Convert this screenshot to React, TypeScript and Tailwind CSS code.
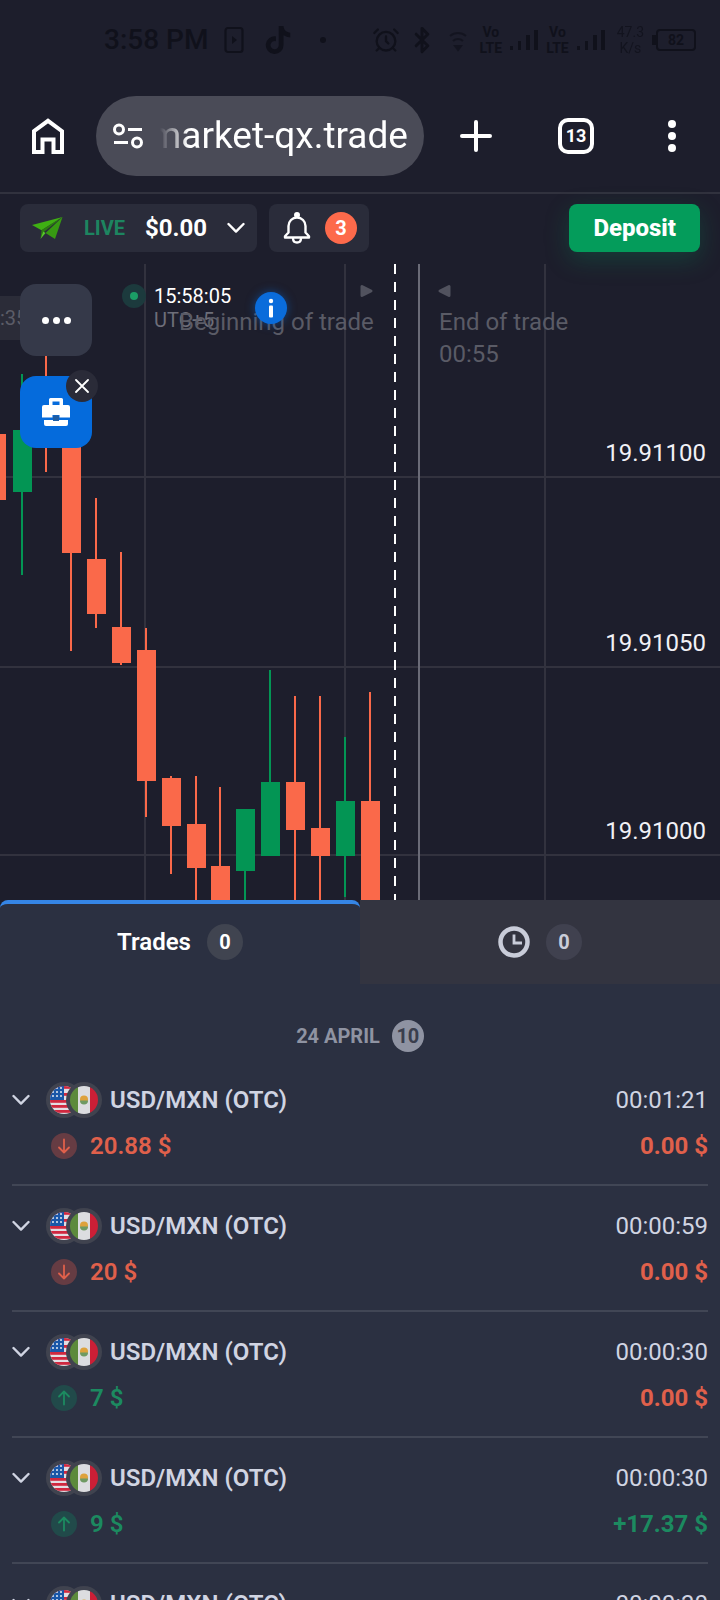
import React from "react";
import clsx from "clsx";
import { FaTiktok } from "react-icons/fa6";
import { AlarmClock, Bluetooth } from "lucide-react";

type Candle = {
  x: number
  high: number
  top: number
  bottom: number
  low: number
  up?: boolean
}

type Trade = {
  pair: string
  duration: string
  amount?: string
  result?: string
  direction: 'up' | 'down'
  won?: boolean
}

// y values are measured from the top of the plot
const CANDLES: Candle[] = [
  { x: -4, high: 170, top: 170, bottom: 236, low: 236 },
  { x: 22, high: 110, top: 166, bottom: 228, low: 311, up: true },
  { x: 46, high: 90, top: 120, bottom: 176, low: 208 },
  { x: 71, high: 160, top: 176, bottom: 289, low: 387 },
  { x: 96, high: 234, top: 295, bottom: 350, low: 364 },
  { x: 121, high: 288, top: 363, bottom: 399, low: 401 },
  { x: 146, high: 364, top: 386, bottom: 517, low: 553 },
  { x: 171, high: 512, top: 514, bottom: 562, low: 610 },
  { x: 196, high: 512, top: 560, bottom: 604, low: 640 },
  { x: 220, high: 523, top: 602, bottom: 640, low: 640 },
  { x: 245, high: 545, top: 545, bottom: 607, low: 640, up: true },
  { x: 270, high: 406, top: 518, bottom: 592, low: 592, up: true },
  { x: 295, high: 432, top: 518, bottom: 566, low: 640 },
  { x: 320, high: 432, top: 564, bottom: 592, low: 640 },
  { x: 345, high: 473, top: 537, bottom: 592, low: 633, up: true },
  { x: 370, high: 428, top: 537, bottom: 640, low: 640 },
]

const TRADES: Trade[] = [
  { pair: 'USD/MXN (OTC)', duration: '00:01:21', amount: '20.88 $', result: '0.00 $', direction: 'down' },
  { pair: 'USD/MXN (OTC)', duration: '00:00:59', amount: '20 $', result: '0.00 $', direction: 'down' },
  { pair: 'USD/MXN (OTC)', duration: '00:00:30', amount: '7 $', result: '0.00 $', direction: 'up' },
  { pair: 'USD/MXN (OTC)', duration: '00:00:30', amount: '9 $', result: '+17.37 $', direction: 'up', won: true },
  { pair: 'USD/MXN (OTC)', duration: '00:00:30', direction: 'up' },
]

const ChevronIcon = ({ className }: { className?: string }) => (
  <svg className={clsx('h-3 w-[18px] shrink-0', className)} viewBox="0 0 18 12" fill="none" stroke="currentColor" strokeWidth="2.4" strokeLinecap="round" strokeLinejoin="round">
    <path d="M1.5 2 9 9.6 16.5 2" />
  </svg>
)

const SignalBars = () => (
  <svg className="h-6 w-7" viewBox="0 0 28 24" fill="currentColor">
    <rect x="0" y="18" width="3" height="4" />
    <rect x="8" y="13" width="3" height="9" />
    <rect x="16" y="7" width="4" height="15" />
    <rect x="24" y="2" width="4" height="20" />
  </svg>
)

const VoLte = () => (
  <div className="flex flex-col items-center text-sm leading-4 font-bold">
    <span>Vo</span>
    <span>LTE</span>
  </div>
)

const StatusBar = () => (
  <div className="flex h-20 shrink-0 items-center justify-between pr-6 pl-[104px] text-[#10111b]">
    <div className="flex items-center">
      <span className="text-[28px] font-medium leading-8">3:58 PM</span>
      <svg className="ml-4 h-7 w-5" viewBox="0 0 20 28" fill="none" stroke="currentColor" strokeWidth="2.2">
        <rect x="1.5" y="2" width="17" height="24" rx="2.5" />
        <path d="m8 10 5 4-5 4Z" fill="currentColor" stroke="none" />
      </svg>
      <FaTiktok className="ml-5 h-7 w-7" />
      <span className="ml-7 h-1.5 w-1.5 rounded-full bg-current" />
    </div>
    <div className="flex items-center gap-2">
      <AlarmClock className="h-7 w-7" />
      <Bluetooth className="h-7 w-7" strokeWidth={2.5} />
      <svg className="mx-1 h-6 w-5 opacity-70" viewBox="0 0 20 24" fill="none" stroke="currentColor" strokeWidth="2">
        <path d="M2 8a12 12 0 0 1 16 0M5 13a7 7 0 0 1 10 0" />
        <path d="m10 22-3-4h6Z" fill="currentColor" />
      </svg>
      <VoLte />
      <SignalBars />
      <VoLte />
      <SignalBars />
      <div className="ml-1 flex flex-col items-center text-sm leading-4 opacity-80">
        <span>47.3</span>
        <span>K/s</span>
      </div>
      <div className="flex items-center">
        <span className="h-2.5 w-1 bg-current" />
        <span className="flex h-[22px] w-10 items-center justify-center rounded-sm border-2 border-current text-sm font-bold">82</span>
      </div>
    </div>
  </div>
)

const BrowserBar = () => {
  const [url, setUrl] = React.useState('market-qx.trade')

  return (
    <div className="flex shrink-0 items-center border-b-2 border-[#31323e] py-4 text-white">
      <button aria-label="Home" className="flex w-24 shrink-0 justify-center">
        <svg className="h-9 w-8" viewBox="0 0 32 36" fill="none" stroke="currentColor" strokeWidth="4">
          <path d="M2 13.2 16 2.8l14 10.4V34h-8.500V21.500h-11V34H2Z" />
        </svg>
      </button>
      <div className="flex h-20 min-w-0 flex-1 items-center gap-1 rounded-full bg-[#4a4b57] px-4">
        <svg className="h-7 w-8 shrink-0" viewBox="0 0 32 28" fill="none" stroke="currentColor" strokeWidth="3">
          <circle cx="7" cy="7.500" r="4.500" />
          <path d="M16 7.500h14M2 20.500h14" />
          <circle cx="25" cy="20.500" r="4.500" />
        </svg>
        <input
          aria-label="Address"
          value={url}
          onChange={(e) => setUrl(e.target.value)}
          className="w-full min-w-0 bg-transparent text-right text-[37px] leading-12 outline-none [mask-image:linear-gradient(to_right,transparent_12px,black_40px)]"
        />
      </div>
      <button aria-label="New tab" className="flex w-[104px] shrink-0 justify-center">
        <svg className="h-8 w-8" viewBox="0 0 32 32" fill="none" stroke="currentColor" strokeWidth="4" strokeLinecap="round">
          <path d="M16 2v28M2 16h28" />
        </svg>
      </button>
      <button aria-label="Open tabs" className="flex w-24 shrink-0 justify-center">
        <span className="flex h-9 w-9 items-center justify-center rounded-[10px] border-4 border-white text-lg font-bold">13</span>
      </button>
      <button aria-label="Menu" className="flex w-24 shrink-0 flex-col items-center gap-1">
        <span className="h-2 w-2 rounded-full bg-white" />
        <span className="h-2 w-2 rounded-full bg-white" />
        <span className="h-2 w-2 rounded-full bg-white" />
      </button>
    </div>
  )
}

const AccountBar = () => (
  <div className="flex shrink-0 items-center px-5 pt-2.5 pb-3">
    <button className="flex h-12 items-center rounded-lg bg-[#2a2c3a] px-3 text-white">
      <svg className="h-6 w-8" viewBox="0 0 32 24">
        <path d="M0 9 30.500 1 9.500 14.200Z" fill="#3fb013" />
        <path d="M30.500 1 23 23l-9.500-6Z" fill="#379a12" />
        <path d="M30.500 1 9.500 14.200 8.500 23l2.800-6.500Z" fill="#2c7d10" />
        <path d="m8.500 23 5-6-2.200-1.500Z" fill="#58c92a" />
      </svg>
      <span className="ml-5 text-xl font-bold text-[#1d8560]">LIVE</span>
      <span className="ml-5 text-2xl font-bold">$0.00</span>
      <ChevronIcon className="ml-5" />
    </button>
    <button aria-label="Notifications" className="ml-3 flex h-12 items-center gap-3.5 rounded-lg bg-[#2a2c3a] pr-3 pl-3.5 text-white">
      <svg className="h-8 w-7" viewBox="0 0 28 32" fill="none" stroke="currentColor" strokeWidth="2.4" strokeLinejoin="round" strokeLinecap="round">
        <circle cx="14" cy="3" r="1.800" fill="currentColor" />
        <path d="M5.500 20.500V14a8.500 8.500 0 0 1 17 0v6.500l3.500 3.700v1.300H2v-1.300Z" />
        <path d="M10 26.500c.3 5.400 7.700 5.400 8 0" />
      </svg>
      <span className="flex h-8 w-8 items-center justify-center rounded-full bg-[#fd6a4b] text-xl font-bold">3</span>
    </button>
    <button className="ml-auto flex h-12 items-center rounded-lg bg-[#049c5b] px-6 text-2xl font-extrabold text-white shadow-[0_8px_24px_rgba(4,156,91,0.25)]">
      Deposit
    </button>
  </div>
)

const Chart = () => (
  <div className="relative shrink-0 overflow-hidden">
    <svg className="block h-[636px] w-full">
      <g stroke="#32323e" strokeWidth="2">
        {[145, 345, 545].map((x) => <line key={x} x1={x} x2={x} y1="0" y2="100%" />)}
        {[213, 403, 591].map((y) => <line key={y} x1="0" x2="100%" y1={y} y2={y} />)}
      </g>
      <line x1="395" x2="395" y1="0" y2="100%" stroke="#fff" strokeWidth="2" strokeDasharray="10 8" />
      <line x1="419" x2="419" y1="0" y2="100%" stroke="#6a6b77" strokeWidth="2" />
      {CANDLES.map((c) => (
        <g key={c.x} fill={c.up ? '#039554' : '#fa694a'}>
          <rect x={c.x - 1} y={c.high} width="2" height={c.low - c.high} />
          <rect x={c.x - 9} y={c.top} width="19" height={c.bottom - c.top} />
        </g>
      ))}
      <path d="M362 22.500v9l9-4.500Z M449 22.500v9l-9-4.500Z" fill="#51525e" stroke="#51525e" strokeWidth="3" strokeLinejoin="round" />
    </svg>

    <span className="absolute top-[173px] right-[14px] text-2xl text-[#f1f1f6]">19.91100</span>
    <span className="absolute top-[363px] right-[14px] text-2xl text-[#f1f1f6]">19.91050</span>
    <span className="absolute top-[551px] right-[14px] text-2xl text-[#f1f1f6]">19.91000</span>

    <span className="absolute top-8 left-0 flex h-11 w-16 items-center bg-[#2b2c38] text-xl text-[#5b5c67]">:35</span>

    <div className="absolute top-5 left-[154px] flex flex-col text-xl leading-6">
      <span className="text-white">15:58:05</span>
      <span className="text-[#6d6e79]">UTC+5</span>
    </div>
    <span className="absolute top-5 left-[122px] flex h-6 w-6 items-center justify-center rounded-full bg-[#1c3a3d]">
      <span className="h-2 w-2 rounded-full bg-[#1b9e66]" />
    </span>

    <span className="absolute top-[42px] left-[179px] text-2xl text-[#5a5b66]">Beginning of trade</span>
    <div className="absolute top-[42px] left-[439px] flex flex-col text-2xl text-[#5a5b66]">
      <span>End of trade</span>
      <span>00:55</span>
    </div>

    <button aria-label="Info" className="absolute top-7 left-[255px] h-8 w-8 rounded-full bg-[#0a6cdb] shadow-[0_0_10px_rgba(10,108,219,0.5)]">
      <svg viewBox="0 0 32 32" fill="#fff">
        <circle cx="16" cy="9" r="2.200" />
        <rect x="14" y="13.500" width="4" height="12" rx="1" />
      </svg>
    </button>

    <div className="absolute top-5 left-5 flex flex-col gap-5">
      <button aria-label="More tools" className="flex h-[72px] w-[72px] items-center justify-center gap-1 rounded-2xl bg-[#353949]">
        <span className="h-[7px] w-[7px] rounded-full bg-white" />
        <span className="h-[7px] w-[7px] rounded-full bg-white" />
        <span className="h-[7px] w-[7px] rounded-full bg-white" />
      </button>
      <button aria-label="Portfolio" className="flex h-[72px] w-[72px] items-center justify-center rounded-2xl bg-[#056bdc]">
        <svg className="h-7 w-7" viewBox="0 0 28 28" fill="#fff">
          <path d="M7 7V1.500Q7 0 8.500 0h11Q21 0 21 1.500V7h5q2 0 2 2v10.500H17.500V17h-7v2.500H0V9q0-2 2-2ZM10.500 3.500V7h7V3.500Z" fillRule="evenodd" />
          <path d="M2 22h9v1h6v-1h9v4q0 2-2 2H4q-2 0-2-2Z" />
          <rect x="11" y="17.500" width="6" height="5.500" rx="1" fill="#1f5da3" />
        </svg>
      </button>
    </div>
    <button aria-label="Close portfolio" className="absolute top-[106px] left-[66px] flex h-8 w-8 items-center justify-center rounded-full bg-[#2a2b38]">
      <svg className="h-3.5 w-3.5" viewBox="0 0 14 14" stroke="#fff" strokeWidth="1.800" strokeLinecap="round">
        <path d="m1 1 12 12M13 1 1 13" />
      </svg>
    </button>
  </div>
)

const FlagPair = () => (
  <svg className="h-9 w-14 shrink-0" viewBox="0 0 56 36">
    <defs>
      <clipPath id="us"><circle cx="18" cy="18" r="14" /></clipPath>
      <clipPath id="mx"><circle cx="38" cy="18" r="14" /></clipPath>
    </defs>
    <circle cx="18" cy="18" r="18" fill="#40434f" />
    <g clipPath="url(#us)">
      <rect x="4" y="4" width="28" height="28" fill="#e4dce2" />
      {[4, 11, 18, 23, 28].map((y) => <rect key={y} x="4" y={y} width="28" height="2.800" fill="#d0283f" />)}
      <rect x="4" y="4" width="14" height="14" fill="#1a57a8" />
      {[6, 10, 14].map((y) => [7, 11, 15].map((x) => <circle key={`${x}-${y}`} cx={x} cy={y} r="1" fill="#e4e8f2" />))}
    </g>
    <circle cx="38" cy="18" r="18" fill="#40434f" />
    <g clipPath="url(#mx)">
      <rect x="24" y="4" width="8" height="28" fill="#5c8a3c" />
      <rect x="32" y="4" width="12" height="28" fill="#dcdde0" />
      <rect x="44" y="4" width="9" height="28" fill="#cc1f36" />
      <circle cx="38" cy="17.500" r="4" fill="#dea23c" />
      <path d="M34 18.500a4 4 0 0 0 8 0" fill="#6f9a63" />
    </g>
  </svg>
)

const TradeRow = ({ trade }: { trade: Trade }) => {
  const isUp = trade.direction === 'up'
  return (
    <li className="flex flex-col gap-3.5 border-b-2 border-[#414655] pt-6 pb-[22px] text-2xl">
      <button className="flex h-8 items-center text-[#d0d4e2]">
        <ChevronIcon />
        <span className="ml-4"><FlagPair /></span>
        <span className="ml-2 font-semibold">{trade.pair}</span>
        <span className="ml-auto">{trade.duration}</span>
      </button>
      {trade.amount && (
        <div className="flex items-center pl-[39px] font-semibold">
          <span className={clsx('flex h-[26px] w-[26px] items-center justify-center rounded-full', isUp ? 'bg-[#214a4a] text-[#1c8a60]' : 'bg-[#663c43] text-[#e0604b]')}>
            <svg className={clsx('h-4 w-3.5', isUp && 'rotate-180')} viewBox="0 0 14 16" fill="none" stroke="currentColor" strokeWidth="1.800" strokeLinecap="round" strokeLinejoin="round">
              <path d="M7 1.500v13M2 9.500l5 5 5-5" />
            </svg>
          </span>
          <span className={clsx('ml-[13px]', isUp ? 'text-[#1c8a60]' : 'text-[#e0604b]')}>{trade.amount}</span>
          <span className={clsx('ml-auto font-bold', trade.won ? 'text-[#1c8a60]' : 'text-[#e0604b]')}>{trade.result}</span>
        </div>
      )}
    </li>
  )
}

const TradesPanel = () => (
  <div className="flex min-h-0 flex-1 flex-col">
    <div className="flex h-[84px] shrink-0">
      <button className="flex flex-1 items-center justify-center gap-4 rounded-t-lg border-t-4 border-[#3585e6] bg-[#2b3041] pb-1 text-2xl font-semibold text-white">
        Trades
        <span className="flex h-9 w-9 items-center justify-center rounded-full bg-[#404450] text-xl font-bold">0</span>
      </button>
      <button aria-label="Pending trades" className="flex flex-1 items-center justify-center gap-4 bg-[#333440] text-xl font-bold text-[#c9ccd9]">
        <svg className="h-8 w-8" viewBox="0 0 32 32" fill="none" stroke="currentColor">
          <circle cx="16" cy="16" r="13.500" strokeWidth="4.500" />
          <path d="M16 8.500V17h8" strokeWidth="2.800" />
        </svg>
        <span className="flex h-9 w-9 items-center justify-center rounded-full bg-[#40414f]">0</span>
      </button>
    </div>
    <div className="min-h-0 flex-1 overflow-hidden bg-[#2b3041] px-3">
      <div className="flex items-center justify-center gap-3 pt-9 pb-2 text-xl font-bold text-[#8f93a2]">
        24 APRIL
        <span className="flex h-8 w-8 items-center justify-center rounded-full bg-[#8f93a2] text-[#3a3e4d]">10</span>
      </div>
      <ul>
        {TRADES.map((trade, index) => <TradeRow key={index} trade={trade} />)}
      </ul>
    </div>
  </div>
)

const App = () => {
  return (
    <div className="flex h-screen flex-col overflow-hidden bg-[#1d1e2c] font-[Roboto,sans-serif]">
      <StatusBar />
      <BrowserBar />
      <AccountBar />
      <Chart />
      <TradesPanel />
    </div>
  )
}

export default App
